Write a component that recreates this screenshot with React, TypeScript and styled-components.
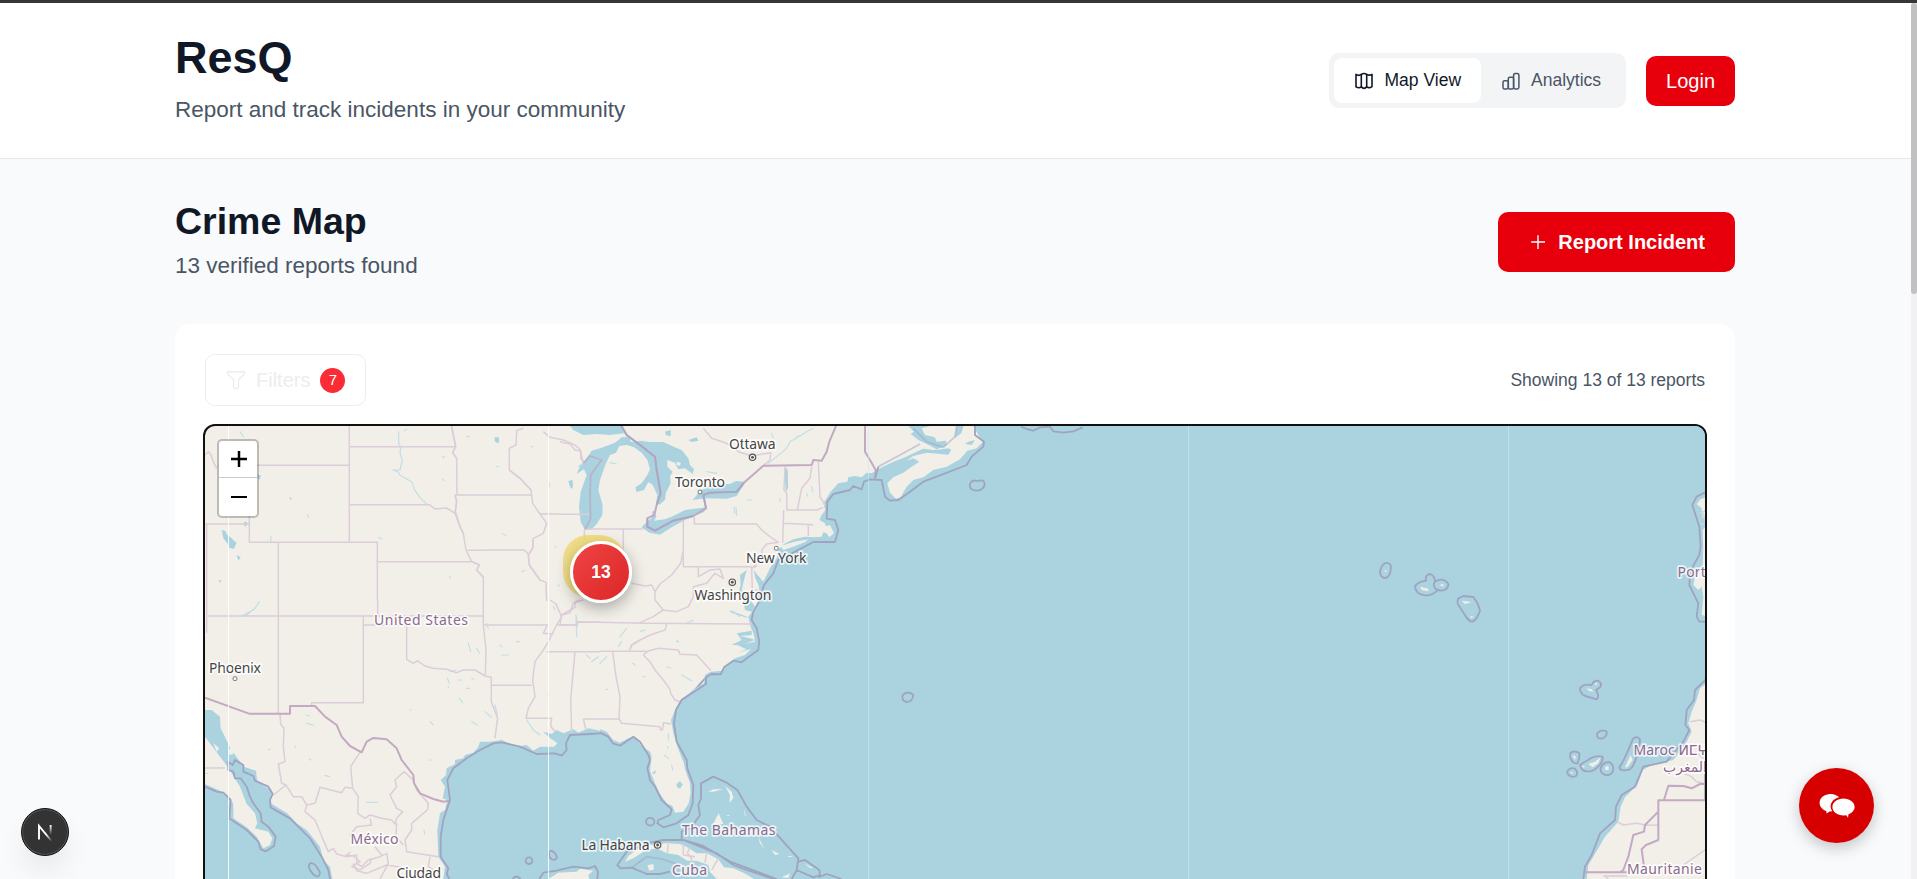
import React from "react";
import styled, { createGlobalStyle } from "styled-components";

const GlobalStyle = createGlobalStyle`
  * {
    box-sizing: border-box;
  }

  body {
    margin: 0;
    background-color: #f9fafb;
    color: #101828;
    font-family: "Liberation Sans", Arial, sans-serif;
    overflow: hidden;
  }

  h1, h2, p {
    margin: 0;
  }

  button {
    font-family: inherit;
    border: none;
    padding: 0;
  }
`;

const SPage = styled.div`
  display: flex;
  flex-direction: column;
  height: 879px;
  overflow: hidden;
`;

const STopBar = styled.div`
  flex: none;
  height: 3px;
  background-color: #35363a;
`;

const SScroller = styled.div`
  display: flex;
  flex: 1;
  min-height: 0;
`;

const SContent = styled.div`
  flex: 1;
  overflow: hidden;
`;

const SScrollTrack = styled.div`
  width: 6px;
  background-color: #f1f1f1;
`;

const SScrollThumb = styled.div`
  height: 291px;
  border-radius: 3px;
  background-color: #c1c1c1;
`;

const SHeader = styled.header`
  display: flex;
  align-items: center;
  justify-content: space-between;
  height: 156px;
  padding: 0 176px 0 175px;
  background-color: white;
  border-bottom: 1px solid #e5e7eb;
`;

const SBrand = styled.h1`
  font-size: 45px;
  line-height: 50px;
`;

const STitle = styled.h2`
  font-size: 37.5px;
  line-height: 45px;
`;

const SSubtitle = styled.p<{ $gap: number }>`
  margin-top: ${(p) => p.$gap}px;
  padding-bottom: 2px;
  font-size: 22.5px;
  line-height: 33px;
  color: #4a5565;
`;

const SActions = styled.div`
  display: flex;
  align-items: center;
  gap: 20px;
  margin-top: 1px;
`;

const STabs = styled.div`
  display: flex;
  padding: 5px;
  margin-bottom: 1px;
  border-radius: 10px;
  background-color: #f3f4f6;
`;

const STab = styled.button<{ $active?: boolean }>`
  display: flex;
  align-items: center;
  gap: ${(p) => (p.$active ? 11 : 10)}px;
  padding: 10px 20px;
  border-radius: 8px;
  font-size: 17.5px;
  line-height: 25px;
  color: ${(p) => (p.$active ? "#101828" : "#4a5565")};
  background-color: ${(p) => (p.$active ? "white" : "transparent")};
`;

const SRedButton = styled.button<{ $large?: boolean }>`
  display: flex;
  align-items: center;
  gap: 10px;
  height: ${(p) => (p.$large ? 60 : 50)}px;
  padding: ${(p) => (p.$large ? "1px 30px 0" : "0 20px")};
  border-radius: 10px;
  background-color: #e7000b;
  color: white;
  font-size: 20px;
  font-weight: ${(p) => (p.$large ? 700 : 400)};
`;

const SMain = styled.main`
  padding: 40px 176px 0 175px;
`;

const STitleRow = styled.div`
  display: flex;
  align-items: center;
  justify-content: space-between;
`;

const SCard = styled.section`
  margin-top: 40px;
  padding: 30px;
  border-radius: 15px;
  background-color: white;
`;

const SFilterRow = styled.div`
  display: flex;
  align-items: center;
  justify-content: space-between;
  margin-bottom: 20px;
`;

const SFilterButton = styled.button`
  display: flex;
  align-items: center;
  gap: 10px;
  height: 52px;
  padding: 0 20px;
  border: 1px solid #ededed;
  border-radius: 10px;
  background-color: white;
  color: #ededed;
  font-size: 20px;
`;

const SBadge = styled.span`
  width: 25px;
  height: 25px;
  border-radius: 50%;
  background-color: #fb2c36;
  color: white;
  font-size: 15px;
  line-height: 24px;
  text-align: center;
`;

const SCount = styled.span`
  font-size: 17.5px;
  color: #4a5565;
`;

const SMap = styled.div`
  position: relative;
  height: 625px;
  border-radius: 10px;
  box-shadow: 0 0 0 2px #101010;
  overflow: hidden;
  background-color: #f2efe9;
`;

const SMapSvg = styled.svg`
  display: block;
`;

const SZoomControl = styled.div`
  position: absolute;
  top: 13px;
  left: 12px;
  width: 42px;
  border: 2px solid rgba(0, 0, 0, 0.22);
  border-radius: 5px;
  background-color: white;
  background-clip: padding-box;
`;

const SZoomButton = styled.button`
  display: flex;
  align-items: center;
  justify-content: center;
  width: 38px;
  height: 36px;
  padding-left: 2px;
  background: transparent;

  & + & {
    height: 39px;
    padding-bottom: 1px;
    border-top: 1px solid #ccc;
  }
`;

const SClusterShade = styled.div`
  position: absolute;
  top: 109px;
  left: 358px;
  width: 62px;
  height: 62px;
  border-radius: 25px;
  background-color: rgba(240, 216, 110, 0.8);
`;

const SCluster = styled.div`
  position: absolute;
  top: 115px;
  left: 365px;
  width: 62px;
  height: 62px;
  border: 3px solid white;
  border-radius: 50%;
  background: linear-gradient(135deg, #ef4444, #dc2626);
  box-shadow: 0 5px 15px rgba(0, 0, 0, 0.3);
  color: white;
  font-size: 17.5px;
  font-weight: 700;
  line-height: 56px;
  text-align: center;
`;

const SDevBadge = styled.div`
  position: fixed;
  left: 21px;
  bottom: 23px;
  display: flex;
  align-items: center;
  justify-content: center;
  width: 48px;
  height: 48px;
  border: 1px solid #111;
  border-radius: 50%;
  background-color: #333;
  box-shadow: inset 0 0 0 1px #555, 0 16px 32px -8px rgba(0, 0, 0, 0.14);
`;

const SChatButton = styled.button`
  position: fixed;
  right: 43px;
  bottom: 36px;
  display: flex;
  align-items: center;
  justify-content: center;
  width: 75px;
  height: 75px;
  border-radius: 50%;
  background-color: #d60000;
  box-shadow: 0 5px 15px rgba(0, 0, 0, 0.22);
`;

const SWater = styled.path`
  fill: #aad3df;
`;

const SLand = styled.path`
  fill: #f2efe9;
`;

const SState = styled.path`
  fill: none;
  stroke: #dccdd8;
  stroke-width: 4.5;
  stroke-linejoin: round;
`;

const SNation = styled.path`
  fill: none;
  stroke: #c3a9c2;
  stroke-width: 6;
  stroke-linejoin: round;
`;

const SCoast = styled.path`
  fill: none;
  stroke: #9fa4c1;
  stroke-width: 5.5;
  stroke-linejoin: round;
`;

const SRiver = styled.path`
  fill: none;
  stroke: #bfdfe6;
  stroke-width: 3.5;
  stroke-linecap: round;
  stroke-linejoin: round;
`;

const SLabel = styled.text<{ $country?: boolean }>`
  font-family: "Noto Sans", "DejaVu Sans", sans-serif;
  font-size: 14px;
  fill: ${(p) => (p.$country ? "#8b6a8e" : "#444")};
  stroke: rgba(255, 255, 255, 0.75);
  stroke-width: 3.5px;
  stroke-linejoin: round;
  paint-order: stroke;
`;

const MapIcon = () => (
  <svg width="20" height="20" viewBox="0 0 20 20" fill="none" stroke="currentColor" strokeWidth="1.6" strokeLinejoin="round" strokeLinecap="round">
    <path d="M2 3.4 C4 4.9 5.6 4.6 7.3 3.4 C9 2.3 11 2.3 12.7 3.4 C14.4 4.6 16 4.4 18 3.4 V15.6 C16 17 14.4 17 12.7 15.9 C11 17.8 9 17.8 7.3 15.9 C5.6 17.2 4 17 2 15.9 Z" />
    <path d="M7.3 3.6 V15.9 M12.7 3.6 V15.9" />
  </svg>
);

const ChartIcon = () => (
  <svg width="20" height="20" viewBox="0 0 20 20" fill="none" stroke="currentColor" strokeWidth="1.5" strokeLinejoin="round">
    <rect x="2" y="9.7" width="5.3" height="8.3" rx="1.6" />
    <rect x="7.3" y="6.3" width="5.3" height="11.7" rx="1.4" />
    <rect x="12.6" y="2.4" width="5.3" height="15.6" rx="1.7" />
  </svg>
);

const FilterIcon = () => (
  <svg width="20" height="20" viewBox="0 0 20 20" fill="none" stroke="currentColor" strokeWidth="1.4" strokeLinejoin="round">
    <path d="M2 1.8 H18 Q19 1.8 18.6 3 Q18 5 12.6 9.6 V16.8 Q12.6 18.4 11 18.4 H9.4 Q7.6 18.4 7.6 16.8 V9.6 Q2 5 1.4 3 Q1 1.8 2 1.8 Z" />
  </svg>
);

const PlusIcon = () => (
  <svg width="20" height="20" viewBox="0 0 20 20" stroke="currentColor" strokeWidth="1.4">
    <path d="M10 3.2 V17 M3.2 10 H17" />
  </svg>
);

const ChatIcon = () => (
  <svg width="36" height="26" viewBox="0 0 36 26" fill="white">
    <path d="M11.7 1 C5.5 1 .6 4.8 .6 9.7 C.6 13.5 3.3 16.6 7.3 18 L7.6 20.4 L10.5 18.5 L13.4 18.3 C11.5 15.7 10.9 12.2 12.9 9 C14.9 6 18 4.7 20.2 4.2 C18.2 2.300 15.2 1 11.7 1 Z" />
    <path d="M24.5 5.5 C18.3 5.5 13.4 9.2 13.4 13.9 C13.4 18.6 18.3 22.4 24.5 22.4 L27.4 22.2 L29 24.8 L29.5 21.2 C33.2 19.8 35.6 17 35.6 13.9 C35.6 9.2 30.6 5.5 24.5 5.5 Z" />
  </svg>
);

const NextIcon = () => (
  <svg width="20" height="20" viewBox="0 0 20 20" fill="none" strokeWidth="1.9">
    <defs>
      <linearGradient id="n-diagonal" x1="3" y1="3" x2="17" y2="19" gradientUnits="userSpaceOnUse">
        <stop offset="0.6" stopColor="white" />
        <stop offset="1" stopColor="white" stopOpacity="0" />
      </linearGradient>
      <linearGradient id="n-stem" x1="0" y1="3" x2="0" y2="13" gradientUnits="userSpaceOnUse">
        <stop stopColor="white" />
        <stop offset="1" stopColor="white" stopOpacity="0" />
      </linearGradient>
    </defs>
    <path d="M4 17.5 V3.8 L16.5 19" stroke="url(#n-diagonal)" />
    <rect x="14.7" y="3" width="1.9" height="10" fill="url(#n-stem)" />
  </svg>
);

const labels = [
  { text: "Ottawa", x: 729, y: 449, w: 46.5 },
  { text: "Toronto", x: 675, y: 486.5, w: 50 },
  { text: "New York", x: 746, y: 563, w: 60.5 },
  { text: "Washington", x: 694.5, y: 600, w: 77 },
  { text: "Phoenix", x: 209, y: 673, w: 52 },
  { text: "Ciudad", x: 396.5, y: 877.5, w: 44.5 },
  { text: "La Habana", x: 581.5, y: 850, w: 68 },
  { text: "United States", x: 374, y: 624.5, w: 94, country: true },
  { text: "México", x: 350.5, y: 844, w: 48, country: true },
  { text: "The Bahamas", x: 682, y: 835, w: 93.5, country: true },
  { text: "Cuba", x: 672, y: 874.5, w: 35, country: true },
  { text: "Portugal", x: 1677.5, y: 577, w: 58, country: true },
  { text: "Maroc ⵍⵎⵖⵔⵉⴱ", x: 1633.5, y: 754.5, country: true },
  { text: "المغرب", x: 1663, y: 771.5, country: true },
  { text: "Mauritanie", x: 1627, y: 874, w: 75, country: true },
];

const towns = [[700, 492], [776.3, 548.3], [235, 678.6]];
const capitals = [[752.5, 457.3], [732.3, 582.2], [657.6, 845]];
const seams = [228, 548, 868, 1188, 1508];

const Plains = () => (
  <g transform="translate(170 320) scale(.33333)">
    <SWater d="M155 630 L165 632 172 645 185 655 192 662 200 668 192 686 178 684 172 670 160 655 Z M222 605 L232 607 228 620 222 616 Z M200 705 L212 712 205 722 Z M974 352 L986 352 988 364 982 370 974 364 Z M263 464 L272 466 270 478 264 476 Z M1198 490 L1206 485 1209 495 1203 508 Z M145 780 L155 782 150 788 Z M357 532 L366 535 362 540 Z" />
    <SRiver d="M686 335 L686 370 692 385 690 400 697 420 690 450 668 450 684 455 690 466 725 485 735 512 752 535 770 552 M702 332 L710 328 M210 335 L220 350 M413 584 L416 592 M303 648 L302 668 M625 653 L636 657 M818 410 L824 412 M818 478 L822 482 M890 349 L898 350 M980 440 L986 440 M1083 380 L1088 380 M1136 485 L1138 500 M838 768 L842 775 M998 642 L1008 646 M1055 755 L1065 750 M1155 680 L1158 682 M1165 795 L1168 798" />
    <SState d="M538 318 V667 M145 436 H538 M105 405 L115 395 122 403 130 425 140 445 M538 380 H857 M845 318 L850 345 857 380 848 398 860 415 861 525 M538 554 H778 L795 567 830 564 855 580 M855 525 H1083 M855 525 L860 545 855 580 M855 570 L870 620 880 640 888 690 905 725 928 735 920 750 940 772 V843 M105 612 H238 M238 580 V667 H622 V843 M325 667 V843 M110 612 V843 M622 725 H905 M893 691 L1063 690 1075 702 M1060 325 L1040 332 1038 375 1018 385 1018 450 1050 475 1083 510 1088 550 1105 575 1130 610 1120 640 1090 655 1088 685 1075 705 1078 735 1110 780 1128 788 1130 843 M1110 582 H1170 M1120 335 L1140 352 1180 360 1215 375 1232 390 1232 415 1245 432" />
    <SState d="M845 318 L850 345 857 380 848 398 860 415 M1018 450 L1050 475 1083 510 M855 525 L860 545 855 580 870 620 880 640 M905 725 L928 735 920 750 940 772 M1090 655 L1088 685 1075 705 1078 735 1110 780" />
  </g>
);

const NorthEast = () => (
  <g transform="translate(560 420) scale(.33333)">
    <SWater d="M3435 18 H1240 L1220 25 1200 60 1180 92 1165 85 1145 88 1120 90 1090 86 1060 100 1035 112 1000 125 960 145 935 160 920 158 905 172 885 168 865 172 862 185 835 190 812 215 800 235 790 250 796 270 785 285 778 300 795 310 800 325 790 335 785 350 760 352 735 350 700 358 672 372 655 388 650 415 630 445 610 485 590 462 582 450 586 475 600 500 592 520 596 545 580 570 565 590 572 620 580 640 585 660 H3435 Z" />
    <SLand d="M1240 18 L1255 45 1268 65 1250 85 1222 92 1200 118 1160 140 1120 150 1090 172 1060 180 1040 200 1022 232 1008 236 990 218 982 190 1000 172 1030 158 1055 140 1078 125 1060 115 1040 122 1060 108 1100 98 1165 104 1185 70 1215 18 Z" />
    <SWater d="M1045 18 L1062 35 1052 42 1075 60 1100 72 1130 88 1160 76 1158 62 1130 65 1125 52 1095 45 1085 25 1110 18 Z M1190 18 L1185 55 1205 38 1210 18 Z M1225 65 L1245 60 1235 75 1215 72 Z" />
    <SWater d="M30 18 L40 30 70 45 110 42 150 45 192 40 182 18 Z M95 92 L125 83 165 68 185 52 210 50 212 66 240 62 270 66 310 66 345 82 365 90 385 115 390 135 402 148 398 162 375 145 355 148 345 128 322 120 322 140 338 155 330 170 332 190 318 218 315 240 298 254 288 248 292 225 278 195 265 186 252 210 230 216 226 202 245 190 262 165 270 148 262 120 245 98 222 82 200 75 178 78 168 98 150 105 138 130 120 180 115 210 128 255 127 285 110 312 95 328 75 330 62 305 57 262 62 215 80 165 72 148 50 162 62 135 72 125 Z" />
    <SWater d="M245 322 L262 303 275 295 278 280 290 288 282 302 315 298 340 288 375 270 440 262 432 276 375 300 335 322 300 344 268 338 Z M398 240 L418 216 440 200 480 192 510 192 528 183 558 185 545 205 530 228 500 236 440 235 Z M276 275 L283 272 286 280 278 285 Z M676 140 L683 150 684 205 678 215 674 170 Z M25 183 L38 180 38 205 30 200 Z M385 60 L410 52 415 62 395 66 Z M315 35 L332 30 332 48 318 46 Z M540 465 L560 450 552 480 545 510 565 530 585 560 575 575 555 570 550 540 535 520 542 495 Z M582 455 L600 475 610 500 600 510 590 480 Z M530 640 L575 632 575 645 540 648 570 655 585 660 545 675 515 675 545 660 Z M508 570 L560 590 565 595 515 578 Z" />
    <SLand d="M662 378 L700 366 745 358 735 366 700 380 670 390 Z M770 330 L790 322 810 315 822 340 808 352 800 340 785 335 Z M350 125 L362 128 360 138 350 134 Z" />
    <SRiver d="M625 130 L650 110 680 85 690 65 740 35 760 25 M528 262 L530 285 M522 262 L524 280 M560 240 H575 M440 155 L470 160 M540 590 L520 575 M50 590 L52 620 M55 140 L75 125 M755 200 L758 215 M740 220 L742 228 M455 612 H470 M380 610 L400 600 M240 635 L255 630 M180 650 L200 625 M700 60 L715 48 M635 40 L640 55 M660 235 V245 M355 665 L350 660 M150 128 L170 132 M110 540 L115 535" />
    <SState d="M0 283 H92 M75 327 H250 M190 327 V490 M73 330 V360 M370 297 V440 H575 M403 290 V312 H590 L605 330 630 350 655 367 620 372 605 390 608 412 580 440 M415 440 V470 L450 450 480 447 490 475 465 460 440 490 400 500 400 530 385 560 350 575 310 570 285 540 285 515 275 495 255 498 215 490 M370 390 L362 430 335 465 300 492 285 515 M575 440 L577 510 600 512 M575 445 L590 438 M50 605 L250 610 575 612 M0 615 H50 V605 M310 570 L280 590 235 610 M320 612 L315 630 270 645 240 660 215 675 208 692 M675 140 L672 210 680 220 681 270 770 270 790 262 M671 270 L668 368 M670 310 L760 314 M745 314 V348 M775 125 L780 230 795 255 M755 140 L750 175 725 205 712 270 M430 25 L455 55 500 70 535 95 575 108 632 98 630 120 610 137 M60 540 L45 545 45 562 5 585 0 615 M0 65 L30 72 45 90 60 92 70 125" />
    <SState d="M70 130 L90 108 125 120 92 165 90 230 92 295 75 328" />
    <SNation d="M185 18 L200 45 240 75 285 110 290 150 302 220 290 255 283 285 262 295 262 320 285 332 340 302 400 288 438 265 430 225 450 218 530 215 550 190 610 137 755 135 760 120 785 122 800 95 808 65 828 18 M915 18 V95 L930 120 947 150 945 175" />
    <SCoast d="M70 130 L90 108 125 120 92 165 90 230 92 295 75 328 M183 18 L200 45 240 75 285 110 290 150 302 220 290 255 M262 295 L262 320 285 332 340 302 400 288 M438 265 L430 225 450 218 530 215 550 190" strokeOpacity=".6" />
    <SCoast d="M365 840 L400 815 440 770 450 762 490 762 520 722 545 728 560 710 590 690 597 660 590 625 575 600 580 575 600 540 612 495 640 460 655 420 700 398 760 366 790 366 825 366 835 330 825 300 800 296 802 245 820 222 870 210 880 198 905 208 912 185 930 178 965 180 975 230 990 242 1015 240 1050 215 1090 185 1130 170 1220 135 1235 110 1270 80 1272 65 1245 45 1245 18 M945 175 L955 140" />
    <SCoast d="M955 140 L1020 105 1080 72 M1060 25 L1100 65 1150 82 1185 50 1190 18" strokeOpacity=".5" />
    <SCoast d="M1232 188 Q1238 178 1252 183 Q1274 176 1274 193 Q1272 210 1250 212 Q1226 210 1230 192 Z M1383 20 L1400 27 1420 32 1440 22 1470 20 1480 34 1510 38 1540 34 1568 22" />
  </g>
);

const Gulf = () => (
  <g transform="translate(200 600) scale(.33333)">
    <SWater d="M1200 392 L1165 385 1135 398 1120 388 1090 400 1070 390 1055 402 1030 395 1045 410 1072 430 1062 440 1020 440 1000 452 980 435 950 440 905 420 870 425 840 425 835 440 820 458 795 465 790 475 765 480 765 492 740 505 738 525 722 540 735 560 728 595 742 600 735 630 720 640 712 690 715 770 735 800 730 837 H1200 Z" />
    <SWater d="M15 330 L35 330 60 350 62 385 82 425 90 445 115 478 132 500 168 512 172 545 215 572 212 610 262 640 290 670 320 690 360 740 370 780 390 800 397 837 H15 Z" />
    <SLand d="M15 410 L45 450 75 490 95 520 120 560 140 612 165 640 172 670 165 685 205 695 217 715 210 735 190 745 170 710 140 682 100 655 100 610 60 572 15 552 Z M85 450 L95 445 100 462 88 465 Z M40 430 L58 445 50 455 Z" />
    <SRiver d="M135 48 L165 25 178 5 M805 130 L812 155 M830 145 L838 160 M750 215 L768 210 M855 335 L875 352 M815 365 L832 375 M778 295 L788 308 M885 315 L892 345 M500 607 H532 M672 690 L674 702 M318 345 L328 348 M320 370 L340 375 M285 438 L287 442 M328 477 L333 480 M375 526 L388 530 M205 450 L210 448 M690 365 L700 375 M742 235 L748 250 M775 240 H785 M800 265 H810 M815 235 L822 238 M745 258 V262 M860 70 L865 85 M900 135 L905 140 M950 125 H958 M905 165 H925 M630 330 H633 M688 480 H694 M980 360 L1000 390 1020 405 M1045 280 V290 M1128 45 L1130 110 M1160 165 L1170 175 M1175 185 L1195 170 M1060 20 L1065 28 M125 48 L160 30 M15 520 H22" />
    <SState d="M20 0 V98 M20 48 H850 M235 0 V340 M533 0 V48 M490 48 V308 H335 V318 M490 75 H620 V178 L640 190 652 182 675 198 700 205 740 208 770 218 790 210 825 210 855 228 874 232 M850 0 V75 L858 150 856 225 M850 75 H1042 L1030 100 1060 103 M874 230 V305 L893 355 888 390 885 415 M874 256 H995 M1050 0 L1068 12 1085 50 1070 75 1045 125 1030 150 1005 185 998 240 1005 290 985 325 978 355 H1055 L1052 378 1065 395 M1068 75 H1128 L1130 67 H1200 M1040 155 H1200 M1125 155 L1112 300 1115 400 M1150 357 H1200 M1150 357 L1158 390 M1085 45 L1110 38 1120 10 1150 0" />
    <SState d="M240 341 L242 372 252 385 250 440 255 485 235 492 240 520 245 550 258 555 220 585 M258 555 L280 590 305 590 320 615 345 610 360 562 425 578 435 562 458 565 452 500 480 457 M458 565 L475 590 473 640 495 655 510 645 545 655 575 660 585 672 590 655 608 635 590 625 570 585 590 560 585 540 612 515 640 540 650 570 685 610 682 630 635 670 635 690 615 720 620 755 715 770 M510 655 L515 675 470 680 450 705 460 720 M590 670 L588 710 610 735 M320 615 L315 635 345 660 370 720 385 755 400 745 410 762 440 770 470 765 470 790 485 800 505 780 540 770 560 760 565 790 540 837 M525 740 L545 765 M500 820 L560 795 620 805 M440 770 L450 755 M460 790 L470 812 500 820 M690 770 L685 800 700 810 M15 504 H75" />
    <SState d="M435 765 L460 768 480 785 455 800 480 810 510 790 515 775" />
    <SNation d="M15 293 L147 341 H270 V318 H345 L375 350 410 375 425 410 450 438 485 457 500 425 520 414 560 418 590 445 605 480 640 525 642 550 660 580 700 597 730 605 748 602" />
    <SCoast d="M15 560 L50 575 70 578 92 600 88 655 140 690 175 725 182 748 198 754 222 738 227 710 205 680 185 665 182 640 160 610 150 590 140 560 122 535 105 535 100 515 85 510 85 485 98 495 105 480 130 495 130 515 160 528 165 542 205 560 218 582 210 600 212 622 270 655 330 715 365 770 385 810 390 837" />
    <SCoast d="M1200 400 L1170 402 1110 405 1098 430 1100 450 1085 467 1065 460 1010 462 960 440 905 427 880 430 840 450 800 475 760 505 742 540 750 600 730 660 722 710 722 770 745 805 740 822 748 837" />
    <SCoast d="M330 790 Q345 785 360 818 Q358 836 342 825 Q320 802 330 790 Z M977 782 a10 10 0 1 0 20 0 a10 10 0 1 0 -20 0 M1052 752 Q1066 755 1071 772 Q1065 786 1050 774 Q1042 758 1052 752 Z M938 837 Q948 822 962 837" />
    <SCoast d="M1018 837 L1030 818 1070 812 1120 800 1165 805 1185 798 1194 815 1192 837" />
    <SLand d="M1045 837 L1075 818 1130 815 1140 806 1180 812 1165 825 1168 837 Z" />
  </g>
);

const Caribbean = () => (
  <g transform="translate(600 640) scale(.33333)">
    <SWater d="M3315 0 H465 L460 20 435 45 405 55 385 72 365 92 330 96 315 105 312 130 285 145 262 165 240 182 225 210 213 240 220 280 232 320 250 365 256 390 270 430 272 460 266 490 250 515 225 518 217 498 200 490 180 462 165 430 150 392 155 350 150 335 125 318 105 290 85 295 60 308 40 300 20 275 0 268 V717 H3315 Z" />
    <SWater d="M400 10 L430 12 465 5 460 25 410 40 440 28 Z M230 432 L240 424 248 434 240 446 230 440 Z M155 400 L168 390 165 402 Z" />
    <SLand d="M75 665 L85 648 110 630 150 615 200 610 240 612 262 622 290 640 320 640 355 658 372 682 400 685 430 698 462 717 H350 L330 695 325 675 290 662 262 662 235 645 200 640 170 625 135 632 100 655 Z M142 676 L160 672 162 688 148 692 Z M325 455 L340 448 370 447 340 455 Z M375 438 L395 455 400 475 388 488 390 465 Z M350 530 L356 520 370 552 340 552 Z M378 525 H390 L385 528 Z M475 590 L492 625 480 610 Z M515 630 L538 642 525 645 Z M545 712 L570 700 565 714 Z M562 648 H580 L570 652 Z M612 670 L640 684 630 684 Z M432 505 L438 530 434 525 Z" />
    <SRiver d="M0 70 L20 50 M105 75 L98 70 M130 110 H136 M18 148 H24 M200 80 L212 85 M245 105 L275 122 M205 280 V300 M203 320 V325 M195 345 V350 M215 375 L218 390 M55 20 L65 5 M230 5 H236 M200 350 L205 355" />
    <SState d="M0 34 H140 M38 34 L48 110 60 170 57 235 65 250 180 260 182 270 188 268 190 248 213 252 M0 237 H58 M90 30 L95 15 118 2 M130 45 L145 33 175 25 235 30 240 43 290 45 333 92 M130 45 L150 65 165 90 190 120 210 148 212 160 225 180 240 185" />
    <SState d="M205 612 L202 640 M250 610 V645 M250 645 L285 650 M320 640 L315 668 M355 655 L335 690 M270 620 L262 640 275 655 270 680" />
    <SCoast d="M478 0 L475 30 440 55 425 67 400 62 372 82 362 103 335 102 318 112 318 132 245 180 228 210 222 250 230 305 260 360 262 385 280 435 278 490 265 525 230 550 190 562 172 550 175 540 210 525 215 508 185 480 165 440 150 420 142 385 150 360 145 345 120 305 100 290 60 317 38 310 25 290 0 278" />
    <SCoast d="M245 597 V575 L275 560 300 525 295 495 303 475 303 430 340 410 380 428 412 450 440 500 470 540 510 560 550 605 595 655 590 690 575 717 M595 665 L615 660 658 690 660 705 640 712 590 690 M655 712 L680 702 725 717 M150 608 L190 600 250 600 310 618 390 665 530 717 M250 600 L300 620 350 640 400 675 440 690 520 717 M150 608 L80 635 52 675 62 685 95 683 140 702 180 702 210 695 M138 545 a12 11 0 1 0 25 0 a12 11 0 1 0 -25 0 M908 165 Q925 150 940 165 Q938 185 920 186 Q904 182 908 165 Z" />
    <SCoast d="M95 683 L140 650 190 658 230 672" strokeOpacity=".5" />
  </g>
);

const Africa = () => (
  <g transform="translate(1540 640) scale(.33333)">
    <SLand d="M500 130 L480 145 468 185 455 215 445 250 455 275 435 315 400 360 330 378 308 390 292 435 255 472 242 500 235 545 195 590 160 650 145 675 140 717 H500 Z M140 145 L155 148 160 155 148 153 Z M166 130 H171 V135 H166 Z M98 345 L108 350 104 360 Z M145 372 L165 365 182 352 175 370 158 382 Z M195 380 L205 378 206 390 196 390 Z M255 382 L272 345 278 360 262 382 Z M126 378 H134 V382 H126 Z M92 396 H98 V400 H92 Z" />
    <SState d="M450 245 L480 240 500 248 M430 400 L455 410 470 425 490 428 M230 545 L250 555 290 550 320 556 355 555 M430 675 L500 626 M190 708 H262 M472 340 L490 355 M195 708 L205 717" />
    <SNation d="M500 432 L480 432 455 445 430 438 385 437 372 480 M500 481 H355 V600 L318 615 305 628 312 680 M355 515 L315 555 312 575 280 585 265 650 250 690 240 697 M130 697 H262 M495 400 V481" />
    <SCoast d="M500 116 L465 150 462 180 440 210 436 255 448 270 430 305 380 365 310 380 285 440 245 465 228 500 225 540 180 580 155 645 135 680 130 717" />
    <SCoast d="M120 145 Q130 130 155 135 Q160 120 175 122 Q188 130 180 142 L168 150 Q180 170 170 178 L150 172 Q118 165 120 145 Z M172 280 Q185 265 200 275 Q202 292 185 296 Q168 296 172 280 Z M92 338 Q105 330 118 340 Q120 355 112 370 Q98 372 90 352 Z M82 395 Q90 380 105 386 Q116 398 108 408 Q92 416 82 400 Z M120 375 Q135 365 150 356 Q170 345 188 350 Q190 362 178 376 Q160 396 145 394 Q125 396 120 375 Z M182 385 Q188 366 208 366 Q225 378 218 396 Q205 412 190 402 Q180 396 182 385 Z M238 382 Q250 365 258 345 Q270 320 278 298 Q290 285 300 298 Q300 315 290 345 Q285 375 270 388 Q240 396 238 382 Z" />
  </g>
);

const Azores = () => (
  <g transform="translate(1360 340) scale(.33333)">
    <SLand d="M1040 470 L1022 478 1010 492 1025 505 1028 530 1040 545 Z M1040 555 L1028 570 1030 620 1028 680 1005 710 1000 735 1015 750 1025 740 1030 770 1025 825 1040 828 Z M72 690 L80 692 78 698 Z M180 740 L205 746 205 754 185 750 Z M238 735 L250 732 250 740 Z M305 782 L335 786 315 792 Z M330 828 L342 830 334 835 Z" />
    <SState d="M1020 520 L1040 510 M1022 550 L1040 558 M1030 520 L1040 560" />
    <SCoast d="M1040 455 L1010 470 997 495 1018 560 1022 620 1018 645 990 695 988 735 1015 790 1010 830 1018 845 1040 845 M68 675 Q80 662 92 675 Q95 700 82 712 Q65 718 60 700 Q60 685 68 675 Z M165 738 Q175 725 198 722 Q195 705 210 702 Q225 708 225 725 Q250 710 265 732 Q265 750 245 752 Q230 748 232 752 Q215 768 195 766 Q165 762 165 738 Z M225 725 Q215 735 232 752 M295 775 L310 768 340 771 Q355 790 360 812 Q350 840 338 845 Q325 845 315 825 L295 795 Q290 785 295 775 Z" />
  </g>
);

const IncidentMap = () => (
  <SMapSvg width="1500" height="453" viewBox="205 426 1500 453">
    <Plains />
    <NorthEast />
    <Gulf />
    <Caribbean />
    <Africa />
    <Azores />
    {seams.map((x) => (
      <rect
        key={x}
        x={x}
        y={426}
        width={1}
        height={453}
        fill={x < 600 ? "white" : "#c0f0fa"}
        opacity={x < 600 ? 0.85 : 0.6}
      />
    ))}
    {towns.map(([x, y]) => (
      <rect key={x} x={x - 1.8} y={y - 1.8} width={3.6} height={3.6} rx={0.8} fill="white" stroke="#777" />
    ))}
    {capitals.map(([x, y]) => (
      <g key={x}>
        <circle cx={x} cy={y} r={3.2} fill="#f2efe9" stroke="#555" strokeWidth={1.2} />
        <circle cx={x} cy={y} r={1.4} fill="#555" />
      </g>
    ))}
    {labels.map((l) => (
      <SLabel key={l.text} x={l.x} y={l.y} textLength={l.w} $country={l.country}>
        {l.text}
      </SLabel>
    ))}
  </SMapSvg>
);

const App = () => (
  <SPage>
    <GlobalStyle />
    <STopBar />
    <SScroller>
      <SContent>
        <SHeader>
          <div>
            <SBrand>ResQ</SBrand>
            <SSubtitle $gap={10}>Report and track incidents in your community</SSubtitle>
          </div>
          <SActions>
            <STabs>
              <STab $active>
                <MapIcon />
                Map View
              </STab>
              <STab>
                <ChartIcon />
                Analytics
              </STab>
            </STabs>
            <SRedButton>Login</SRedButton>
          </SActions>
        </SHeader>
        <SMain>
          <STitleRow>
            <div>
              <STitle>Crime Map</STitle>
              <SSubtitle $gap={5}>13 verified reports found</SSubtitle>
            </div>
            <SRedButton $large>
              <PlusIcon />
              Report Incident
            </SRedButton>
          </STitleRow>
          <SCard>
            <SFilterRow>
              <SFilterButton>
                <FilterIcon />
                Filters
                <SBadge>7</SBadge>
              </SFilterButton>
              <SCount>Showing 13 of 13 reports</SCount>
            </SFilterRow>
            <SMap>
              <IncidentMap />
              <SClusterShade />
              <SCluster>13</SCluster>
              <SZoomControl>
                <SZoomButton>
                  <svg width="16" height="16" stroke="black" strokeWidth="2.5">
                    <path d="M8 0 V16 M0 8 H16" />
                  </svg>
                </SZoomButton>
                <SZoomButton>
                  <svg width="16" height="16" stroke="black" strokeWidth="2.2">
                    <path d="M0 8 H16" />
                  </svg>
                </SZoomButton>
              </SZoomControl>
            </SMap>
          </SCard>
        </SMain>
      </SContent>
      <SScrollTrack>
        <SScrollThumb />
      </SScrollTrack>
    </SScroller>
    <SDevBadge>
      <NextIcon />
    </SDevBadge>
    <SChatButton>
      <ChatIcon />
    </SChatButton>
  </SPage>
);

export default App;
